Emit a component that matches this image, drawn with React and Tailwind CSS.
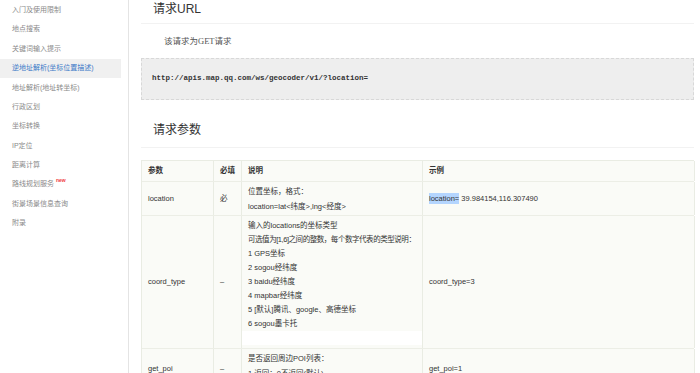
import React from 'react';

const navItems = [
  '入门及使用限制',
  '地点搜索',
  '关键词输入提示',
  '逆地址解析(坐标位置描述)',
  '地址解析(地址转坐标)',
  '行政区划',
  '坐标转换',
  'IP定位',
  '距离计算',
  '路线规划服务',
  '街景场景信息查询',
  '附录',
];

const coordLines = [
  '输入的locations的坐标类型',
  '可选值为[1,6]之间的整数，每个数字代表的类型说明：',
  '1 GPS坐标',
  '2 sogou经纬度',
  '3 baidu经纬度',
  '4 mapbar经纬度',
  '5 [默认]腾讯、google、高德坐标',
  '6 sogou墨卡托',
];

function Sidebar() {
  return (
    <div className="w-[129px] shrink-0 border-r border-[#e4e4e4] pr-[7px] pt-[0.5px] h-[373px]">
      {navItems.map((item, i) => (
        <div
          key={item}
          className={`h-[19.4px] flex items-center pl-[12px] text-[7px] whitespace-nowrap ${
            i === 3 ? 'bg-[#f0f0f0] text-[#3b78c7]' : 'text-[#8a8a8a]'
          }`}
        >
          {item}
          {item === '路线规划服务' && (
            <sup className="text-[#f03c3c] text-[5px] ml-[2px] -mt-[4px] font-bold">new</sup>
          )}
        </div>
      ))}
    </div>
  );
}

function Cell({ className = '', children }) {
  return (
    <div className={`border-r border-[#e9ece3] px-[6px] whitespace-nowrap overflow-hidden ${className}`}>
      {children}
    </div>
  );
}

function ParamTable() {
  const row = 'grid grid-cols-[72px_28px_181px_272px] border-b border-[#eceee6] bg-[#fafbf7]';
  return (
    <div className="w-[553px] border-l border-t border-[#e9ece3] text-[7.5px] text-[#333]">
      <div className={`${row} bg-[#f1f5ea] h-[21px] font-bold`}>
        <Cell className="flex items-center">参数</Cell>
        <Cell className="flex items-center">必填</Cell>
        <Cell className="flex items-center">说明</Cell>
        <Cell className="flex items-center">示例</Cell>
      </div>
      <div className={`${row} h-[34px]`}>
        <Cell className="flex items-center">location</Cell>
        <Cell className="flex items-center">必</Cell>
        <Cell className="flex flex-col justify-center leading-[15px]">
          <div>位置坐标，格式：</div>
          <div>location=lat&lt;纬度&gt;,lng&lt;经度&gt;</div>
        </Cell>
        <Cell className="flex items-center">
          <span className="bg-[#b4d5fe]">location=</span>
          <span>&nbsp;39.984154,116.307490</span>
        </Cell>
      </div>
      <div className={`${row} h-[133px]`}>
        <Cell className="flex items-center">coord_type</Cell>
        <Cell className="flex items-center">–</Cell>
        <Cell className="pt-[3px] leading-[14px]">
          {coordLines.map((l, i) => (
            <div key={l} className={i === 1 ? 'tracking-[-0.45px]' : ''}>
              {l}
            </div>
          ))}
          <div className="h-[14px] bg-white -mx-[6px]" />
        </Cell>
        <Cell className="flex items-center">coord_type=3</Cell>
      </div>
      <div className={`${row} h-[40px]`}>
        <Cell className="flex items-center">get_poi</Cell>
        <Cell className="flex items-center">–</Cell>
        <Cell className="pt-[2px] leading-[15px]">
          <div>是否返回周边POI列表：</div>
          <div>1.返回；0不返回(默认)</div>
        </Cell>
        <Cell className="flex items-center">get_poi=1</Cell>
      </div>
    </div>
  );
}

export default function App() {
  return (
    <div
      className="w-[700px] h-[373px] overflow-hidden bg-white flex"
      style={{ fontFamily: '"Liberation Sans", "Noto Sans CJK SC", sans-serif' }}
    >
      <Sidebar />
      <div className="flex-1 pl-[12px] pr-[6px]">
        <div className="h-[24px] flex items-center pl-[12px] text-[12px] text-[#333] border-b border-[#f2f2f2] pb-[5px]">
          请求URL
        </div>
        <div
          className="h-[34px] flex items-center pl-[23px] text-[8.5px] text-[#555]"
          style={{ fontFamily: '"Liberation Serif", "Noto Sans CJK SC", serif' }}
        >
          该请求为GET请求
        </div>
        <div className="h-[42px] flex items-center pl-[10px] bg-[#eeeeee] border border-dashed border-[#d8d8d8]">
          <span
            className="text-[7.5px] font-bold text-[#333]"
            style={{ fontFamily: '"Liberation Mono", monospace' }}
          >
            http://apis.map.qq.com/ws/geocoder/v1/?location=
          </span>
        </div>
        <div className="h-[48px] flex items-end pl-[12px] pb-[8px] text-[12px] text-[#333] border-b border-[#f2f2f2]">
          请求参数
        </div>
        <div className="pt-[12px]">
          <ParamTable />
        </div>
      </div>
    </div>
  );
}
